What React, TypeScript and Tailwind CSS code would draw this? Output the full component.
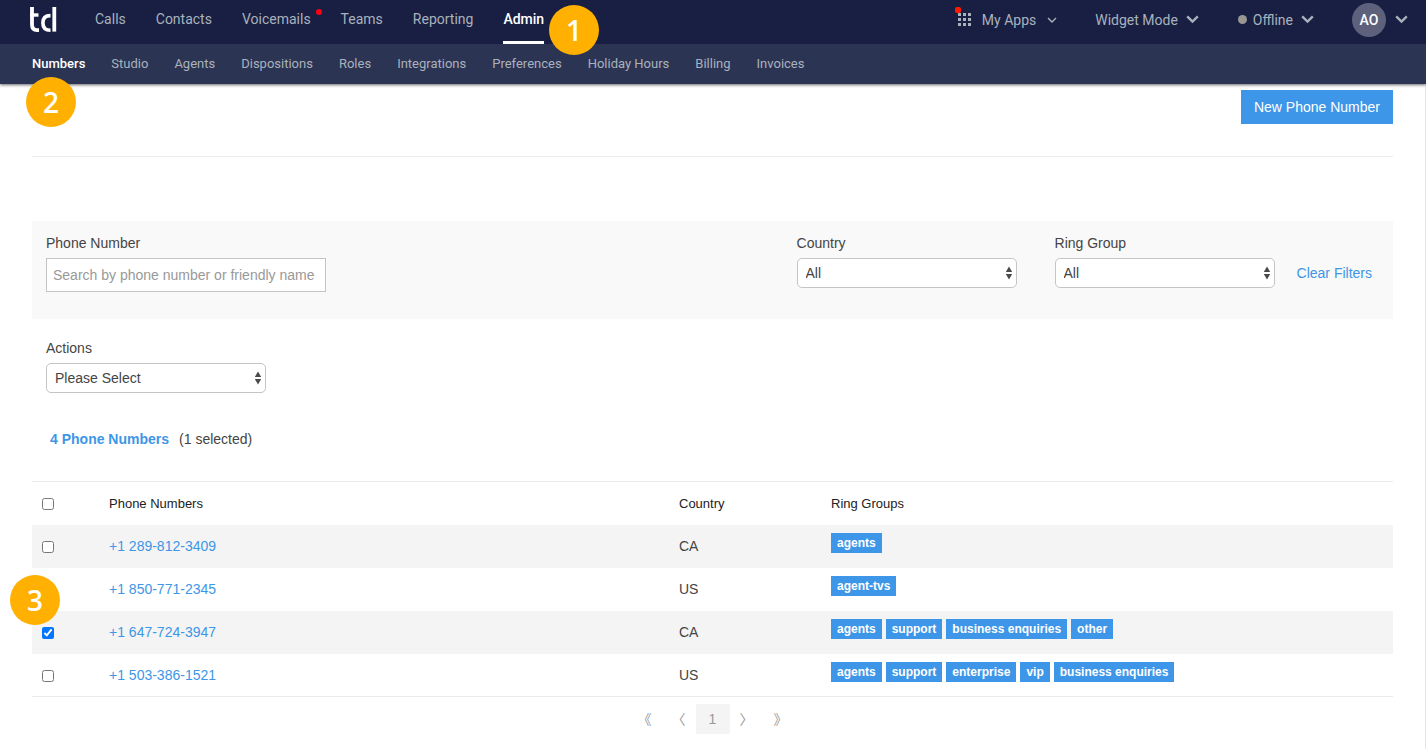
import React, { useState } from 'react';

interface PhoneNumber {
  number: string;
  country: string;
  groups: string[];
}

const mainLinks = ['Calls', 'Contacts', 'Voicemails', 'Teams', 'Reporting', 'Admin'];

const subLinks = [
  'Numbers',
  'Studio',
  'Agents',
  'Dispositions',
  'Roles',
  'Integrations',
  'Preferences',
  'Holiday Hours',
  'Billing',
  'Invoices',
];

const phoneNumbers: PhoneNumber[] = [
  { number: '+1 289-812-3409', country: 'CA', groups: ['agents'] },
  { number: '+1 850-771-2345', country: 'US', groups: ['agent-tvs'] },
  { number: '+1 647-724-3947', country: 'CA', groups: ['agents', 'support', 'business enquiries', 'other'] },
  { number: '+1 503-386-1521', country: 'US', groups: ['agents', 'support', 'enterprise', 'vip', 'business enquiries'] },
];

const Logo = () => (
  <svg width="28" height="26" viewBox="0 0 28 26" fill="none" stroke="#fff" aria-hidden="true">
    <path d="M2 0v17.5c0 4 1.6 5.6 5 5.6h2" strokeWidth="3.8" />
    <path d="M0 8h8.5" strokeWidth="3.4" />
    <path d="M20.5 8.6c-5 0-7.6 2.8-7.6 7.3s2.6 7.3 7.6 7.3" strokeWidth="3.6" />
    <path d="M24.3 0v24.6" strokeWidth="3.8" />
  </svg>
);

const Chevron = ({ thin = false }: { thin?: boolean }) =>
  thin ? (
    <svg width="10" height="6" viewBox="0 0 10 6" fill="none" stroke="currentColor" strokeWidth="1.4" aria-hidden="true">
      <path d="M1 1l4 4 4-4" />
    </svg>
  ) : (
    <svg width="13" height="9" viewBox="0 0 13 9" fill="none" stroke="currentColor" strokeWidth="2.4" aria-hidden="true">
      <path d="M1.2 1.4l5.3 5.2 5.3-5.2" />
    </svg>
  );

const AppsGrid = () => (
  <svg width="13" height="13" viewBox="0 0 13 13" fill="currentColor" aria-hidden="true">
    {[0, 5, 10].map((y) =>
      [0, 5, 10].map((x) => <rect key={`${x}-${y}`} x={x} y={y} width="3" height="3" />)
    )}
  </svg>
);

// Numbered walkthrough marker
const Step = ({ n, className }: { n: number; className: string }) => (
  <div
    className={`absolute z-20 flex h-[50px] w-[50px] items-center justify-center rounded-full bg-[#ffb000] font-['Open_Sans',sans-serif] text-[28px] font-semibold text-white ${className}`}
  >
    {n}
  </div>
);

interface SelectFieldProps {
  id: string;
  label: string;
  options: string[];
}

const SelectField: React.FC<SelectFieldProps> = ({ id, label, options }) => (
  <div>
    <label htmlFor={id} className="mb-[5px] block leading-5">{label}</label>
    <div className="relative w-[220px]">
      <select
        id={id}
        className="block h-[30px] w-full appearance-none rounded-[5px] border border-[#c4c4c4] bg-white px-2 text-[#444]"
      >
        {options.map((option) => (
          <option key={option}>{option}</option>
        ))}
      </select>
      <svg
        className="pointer-events-none absolute top-2 right-1"
        width="8"
        height="14"
        viewBox="0 0 8 14"
        fill="#4a4a4a"
        aria-hidden="true"
      >
        <path d="M4 0.5L7.2 6H0.8zM4 13.5L0.8 8h6.4z" />
      </svg>
    </div>
  </div>
);

const Header = () => (
  <header className="relative z-10 font-[Roboto,sans-serif] text-[#a9b2bc] shadow-[0_1px_3px_rgba(0,0,0,0.6)]">
    <div className="flex h-11 justify-between bg-[#181f43] pr-[18px] pl-[30px] text-sm">
      <div className="flex">
        <a href="#home" aria-label="Home" className="mt-[7px] mr-[37px]">
          <Logo />
        </a>
        <nav className="flex gap-[30px]">
          {mainLinks.map((link) => (
            <a
              key={link}
              href={`#${link.toLowerCase()}`}
              className={`relative flex h-11 items-center border-b-3 pb-[3px] ${
                link === 'Admin' ? 'border-white font-medium text-white' : 'border-transparent'
              }`}
            >
              {link}
              {link === 'Voicemails' && (
                <span className="absolute top-[9px] -right-[11px] h-1.5 w-1.5 rounded-full bg-[#ff0010]" />
              )}
            </a>
          ))}
        </nav>
      </div>
      <div className="flex h-[39px] items-center">
        <button className="relative flex items-center gap-[11px]">
          <AppsGrid />
          <span className="absolute -top-[3px] -left-[3px] h-1.5 w-1.5 rounded-xs bg-[#ff1a00]" />
          <span>My Apps</span>
          <Chevron thin />
        </button>
        <button className="ml-[38px] flex items-center gap-2">
          Widget Mode
          <Chevron />
        </button>
        <button className="ml-[39px] flex items-center gap-2">
          <span className="-mr-0.5 h-[9px] w-[9px] rounded-full bg-[#999793]" />
          Offline
          <Chevron />
        </button>
        <button className="ml-[38px] flex items-center gap-[9px]">
          <span className="flex h-[34px] w-[34px] items-center justify-center rounded-full bg-[#5d617b] text-sm font-medium text-white">
            AO
          </span>
          <Chevron />
        </button>
      </div>
    </div>
    <nav className="flex h-10 items-center gap-[26px] bg-[#2c3454] px-8 text-[13px]">
      {subLinks.map((link) => (
        <a
          key={link}
          href={`#${link.toLowerCase()}`}
          className={link === 'Numbers' ? 'font-medium text-white' : ''}
        >
          {link}
        </a>
      ))}
    </nav>
  </header>
);

const Pagination = () => (
  <nav
    aria-label="Pages"
    className="mt-[7px] flex h-[30px] justify-center font-['Liberation_Sans','Noto_Sans_CJK_SC',sans-serif] text-[#999]"
  >
    <button aria-label="First page" className="w-[34px]">《</button>
    <button aria-label="Previous page" className="w-[34px]">〈</button>
    <button className="w-[34px] bg-[#f4f4f4]">1</button>
    <button aria-label="Next page" className="w-[34px]">〉</button>
    <button aria-label="Last page" className="w-[34px]">》</button>
  </nav>
);

const App: React.FC = () => {
  const [search, setSearch] = useState('');
  const [selected, setSelected] = useState<string[]>(['+1 647-724-3947']);

  const toggle = (number: string) => {
    setSelected((prev) => (prev.includes(number) ? prev.filter((n) => n !== number) : [...prev, number]));
  };

  const allSelected = selected.length === phoneNumbers.length;

  const toggleAll = () => {
    setSelected(allSelected ? [] : phoneNumbers.map((p) => p.number));
  };

  return (
    <div className="relative flex min-h-screen flex-col bg-white font-['Liberation_Sans',Arial,sans-serif] text-sm text-[#444]">
      <Header />
      <Step n={1} className="top-[5px] left-[549px]" />
      <Step n={2} className="top-[77px] left-[26px]" />
      <Step n={3} className="top-[575px] left-[10px]" />

      <main className="flex-1 border-r border-[#e5e5e5] px-8">
        <div className="flex justify-end border-b border-[#ebebeb] pt-1.5 pb-8">
          <button className="h-[34px] bg-[#3d96e7] px-[13px] text-white">New Phone Number</button>
        </div>

        {/* Filters */}
        <div className="mt-16 flex h-[98px] justify-between bg-[#f9f9f9] pt-3 pr-[21px] pl-3.5">
          <div>
            <label htmlFor="search" className="mb-[5px] block leading-5">Phone Number</label>
            <input
              id="search"
              type="text"
              value={search}
              onChange={(e) => setSearch(e.target.value)}
              placeholder="Search by phone number or friendly name"
              className="h-[34px] w-[280px] border border-[#c4c4c4] bg-white px-1.5 placeholder:text-[#999]"
            />
          </div>
          <div className="flex">
            <SelectField id="country" label="Country" options={['All', 'CA', 'US']} />
            <div className="ml-[38px]">
              <SelectField id="ring-group" label="Ring Group" options={['All', 'agents', 'support']} />
            </div>
            <a href="#clear" className="mt-[30px] ml-[22px] text-[#3d96e7]">Clear Filters</a>
          </div>
        </div>

        <div className="mt-[19px] pl-3.5">
          <SelectField id="actions" label="Actions" options={['Please Select', 'Edit', 'Delete']} />
        </div>

        <p className="mt-9 flex gap-2.5 pl-[18px] leading-5">
          <strong className="text-[#3d96e7]">{phoneNumbers.length} Phone Numbers</strong>
          <span>({selected.length} selected)</span>
        </p>

        <table className="mt-8 w-full table-fixed border-collapse border-y border-[#ebebeb] text-left">
          <thead>
            <tr className="h-[43px] text-[13px] text-[#222]">
              <th className="w-[77px] pl-[10px]">
                <input
                  type="checkbox"
                  aria-label="Select all"
                  checked={allSelected}
                  onChange={toggleAll}
                  className="mt-0.5 block h-3 w-3"
                />
              </th>
              <th className="w-[570px] pt-0.5 font-medium">Phone Numbers</th>
              <th className="w-[152px] pt-0.5 font-medium">Country</th>
              <th className="pt-0.5 font-medium">Ring Groups</th>
            </tr>
          </thead>
          <tbody>
            {phoneNumbers.map((p) => (
              <tr key={p.number} className="h-[43px] odd:bg-[#f4f4f4]">
                <td className="pl-[10px]">
                  <input
                    type="checkbox"
                    aria-label={p.number}
                    checked={selected.includes(p.number)}
                    onChange={() => toggle(p.number)}
                    className="mt-0.5 block h-3 w-3"
                  />
                </td>
                <td>
                  <a href="#number" className="text-[#3d96e7]">{p.number}</a>
                </td>
                <td>{p.country}</td>
                <td className="pb-1.5">
                  <div className="flex gap-1">
                    {p.groups.map((group) => (
                      <span
                        key={group}
                        className="h-5 bg-[#3d96e7] px-1.5 text-xs leading-5 font-bold text-white"
                      >
                        {group}
                      </span>
                    ))}
                  </div>
                </td>
              </tr>
            ))}
          </tbody>
        </table>

        <Pagination />
      </main>
    </div>
  );
};

export default App;
